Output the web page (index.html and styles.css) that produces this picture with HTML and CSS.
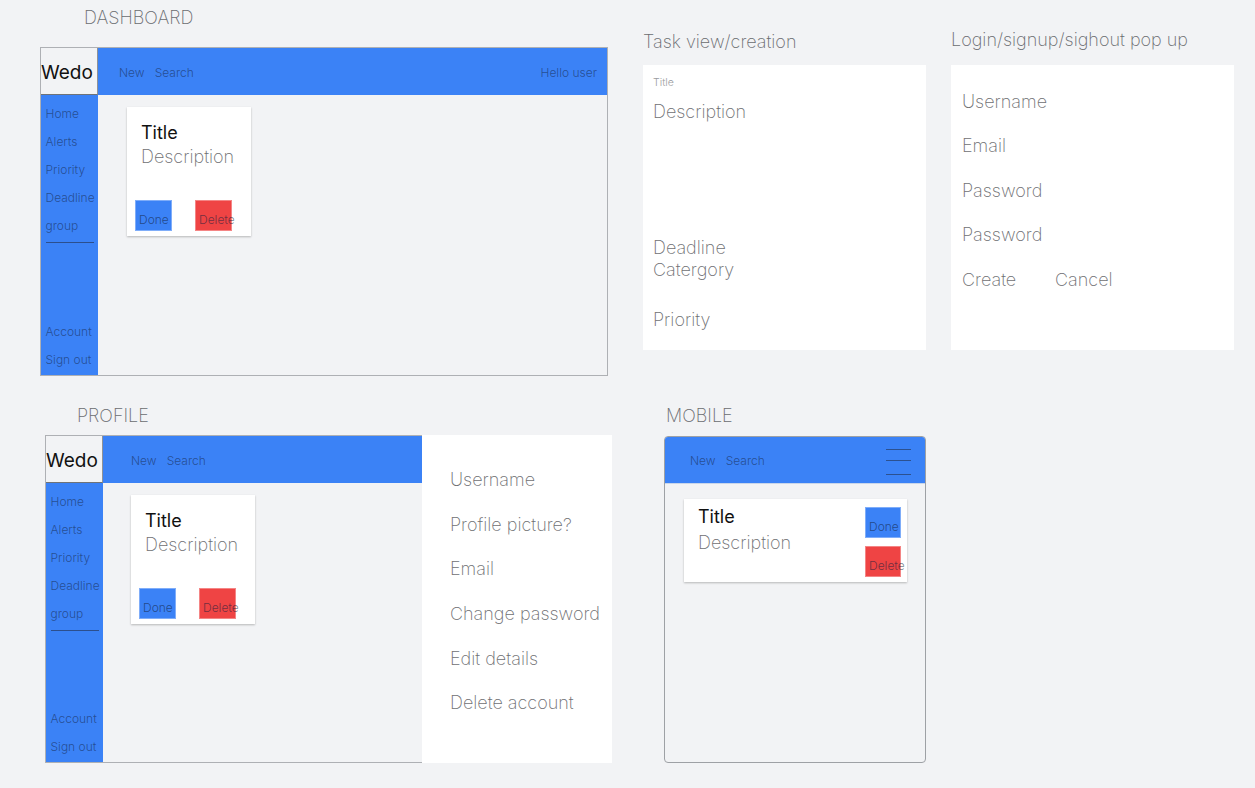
FILE: index.html
```html
<!DOCTYPE html>
<html lang="en">
<head>
    <meta charset="UTF-8">
    <meta name="viewport" content="width=device-width, initial-scale=1.0">
    <title>Wedo wireframes</title>
    <link rel="stylesheet" href="styles.css">
</head>
<body>
    <div class="canvas">

        <!-- Dashboard -->
        <section class="board board-dashboard">
            <h2 class="board-label">DASHBOARD</h2>
            <div class="app app-dashboard">
                <div class="logo">Wedo</div>
                <header class="topbar">
                    <span>New</span>
                    <span>Search</span>
                    <span class="hello">Hello user</span>
                </header>
                <nav class="sidebar">
                    <a>Home</a>
                    <a>Alerts</a>
                    <a>Priority</a>
                    <a>Deadline</a>
                    <a>group</a>
                    <hr class="divider">
                    <div class="sidebar-bottom">
                        <a>Account</a>
                        <a>Sign out</a>
                    </div>
                </nav>
                <main class="main">
                    <div class="task-card">
                        <div class="task-title">Title</div>
                        <div class="task-desc">Description</div>
                        <div class="task-actions">
                            <button class="btn btn-done">Done</button>
                            <button class="btn btn-delete">Delete</button>
                        </div>
                    </div>
                </main>
            </div>
        </section>

        <!-- Task view / creation -->
        <section class="board board-task">
            <h2 class="board-label">Task view/creation</h2>
            <div class="panel task-form">
                <div class="field-small">Title</div>
                <div class="field field-desc">Description</div>
                <div class="field field-deadline">Deadline</div>
                <div class="field">Catergory</div>
                <div class="field field-priority">Priority</div>
            </div>
        </section>

        <!-- Login popup -->
        <section class="board board-login">
            <h2 class="board-label">Login/signup/sighout pop up</h2>
            <div class="panel login-form">
                <div class="field">Username</div>
                <div class="field">Email</div>
                <div class="field">Password</div>
                <div class="field">Password</div>
                <div class="field form-actions">
                    <span class="create">Create</span>
                    <span>Cancel</span>
                </div>
            </div>
        </section>

        <!-- Profile -->
        <section class="board board-profile">
            <h2 class="board-label">PROFILE</h2>
            <div class="profile-frame">
                <div class="app app-profile">
                    <div class="logo">Wedo</div>
                    <header class="topbar">
                        <span>New</span>
                        <span>Search</span>
                    </header>
                    <nav class="sidebar">
                        <a>Home</a>
                        <a>Alerts</a>
                        <a>Priority</a>
                        <a>Deadline</a>
                        <a>group</a>
                        <hr class="divider">
                        <div class="sidebar-bottom">
                            <a>Account</a>
                            <a>Sign out</a>
                        </div>
                    </nav>
                    <main class="main">
                        <div class="task-card">
                            <div class="task-title">Title</div>
                            <div class="task-desc">Description</div>
                            <div class="task-actions">
                                <button class="btn btn-done">Done</button>
                                <button class="btn btn-delete">Delete</button>
                            </div>
                        </div>
                    </main>
                </div>
                <div class="profile-panel">
                    <div class="field">Username</div>
                    <div class="field">Profile picture?</div>
                    <div class="field">Email</div>
                    <div class="field">Change password</div>
                    <div class="field">Edit details</div>
                    <div class="field">Delete account</div>
                </div>
            </div>
        </section>

        <!-- Mobile -->
        <section class="board board-mobile">
            <h2 class="board-label">MOBILE</h2>
            <div class="phone">
                <header class="topbar phone-bar">
                    <span>New</span>
                    <span>Search</span>
                    <svg class="burger" width="25" height="47" viewBox="0 0 25 47">
                        <line x1="0" y1="12.5" x2="25" y2="12.5"/>
                        <line x1="0" y1="23.5" x2="25" y2="23.5"/>
                        <line x1="0" y1="37.5" x2="25" y2="37.5"/>
                    </svg>
                </header>
                <div class="phone-body">
                    <div class="mobile-card">
                        <div class="mobile-text">
                            <div class="task-title">Title</div>
                            <div class="task-desc">Description</div>
                        </div>
                        <div class="mobile-actions">
                            <button class="btn btn-done">Done</button>
                            <button class="btn btn-delete">Delete</button>
                        </div>
                    </div>
                </div>
            </div>
        </section>

    </div>
</body>
</html>
```

FILE: styles.css
```css
* {
    margin: 0;
    padding: 0;
    box-sizing: border-box;
}

body {
    font-family: 'Inter', 'Liberation Sans', sans-serif;
    background: #f2f3f5;
    width: 1255px;
    height: 788px;
    overflow: hidden;
}

/* free canvas, every board sits where it was drawn */
.canvas {
    position: relative;
    width: 1255px;
    height: 788px;
}

.board {
    position: absolute;
    display: flex;
    flex-direction: column;
}

.board-label {
    font-size: 18px;
    line-height: 22px;
    font-weight: 200;
    color: #6a6c70;
    white-space: nowrap;
}

.board-dashboard { left: 40px; top: 7px; }
.board-dashboard .board-label { margin: 0 0 18px 44px; }

.board-task { left: 643px; top: 31px; }
.board-task .board-label { margin-bottom: 12px; }

.board-login { left: 951px; top: 29px; }
.board-login .board-label { margin-bottom: 14px; }

.board-profile { left: 45px; top: 405px; }
.board-profile .board-label { margin: 0 0 8px 32px; }

.board-mobile { left: 664px; top: 405px; }
.board-mobile .board-label { margin: 0 0 9px 2px; }

/* app shell */
.app {
    display: grid;
    grid-template-columns: 57px 1fr;
    grid-template-rows: 47px 1fr;
    border: 1px solid #aeb0b4;
}

.app-dashboard {
    width: 568px;
    height: 329px;
}

.logo {
    background: #f2f3f5;
    border-right: 1px solid #8f9297;
    border-bottom: 1px solid #6f7378;
    font-size: 19px;
    line-height: 49px;
    color: #111;
    white-space: nowrap;
    overflow: visible;
}

.topbar {
    display: flex;
    align-items: center;
    gap: 10px;
    background: #3b82f6;
    padding: 2px 10px 0 21px;
    font-size: 12px;
    font-weight: 300;
    color: rgba(20, 30, 60, 0.55);
}

.hello {
    margin-left: auto;
}

.sidebar {
    display: flex;
    flex-direction: column;
    background: #3b82f6;
    padding: 5px 4px 1px 4.5px;
    font-size: 12px;
    font-weight: 300;
    line-height: 28px;
    color: rgba(20, 30, 60, 0.55);
}

.divider {
    border: none;
    height: 1px;
    background: #2c4f8d;
    margin-top: 2px;
}

.sidebar-bottom {
    display: flex;
    flex-direction: column;
    margin-top: auto;
}

.main {
    padding: 12px 29px;
}

/* task card */
.task-card {
    width: 124px;
    height: 129px;
    background: #fff;
    box-shadow: 0 1px 2px rgba(0, 0, 0, 0.25);
    padding: 14.5px 8px 0 14px;
}

.task-title {
    font-size: 18px;
    line-height: 22px;
    color: #111;
}

.task-desc {
    margin-top: 2.5px;
    font-size: 18px;
    line-height: 22px;
    font-weight: 200;
    color: #6f7073;
    white-space: nowrap;
}

.task-actions {
    display: flex;
    gap: 23px;
    margin: 32px 0 0 -6px;
}

.btn {
    display: block;
    width: 37px;
    height: 31px;
    padding: 8px 0 0 3px;
    border: 1px solid rgba(255, 255, 255, 0.35);
    font-family: inherit;
    font-size: 12px;
    line-height: 15px;
    font-weight: 300;
    text-align: left;
    white-space: nowrap;
    color: rgba(20, 30, 60, 0.6);
    overflow: visible;
}

.btn-done {
    background: #3b82f6;
}

.btn-delete {
    background: #ef4444;
}

/* white panels */
.panel {
    background: #fff;
    width: 283px;
    height: 285px;
    display: flex;
    flex-direction: column;
}

.field {
    font-size: 18px;
    line-height: 22px;
    font-weight: 200;
    color: #6f7073;
    white-space: nowrap;
}

.task-form {
    padding: 12px 10px;
}

.field-small {
    font-size: 10.5px;
    line-height: 12px;
    font-weight: 300;
    color: #9a9b9e;
}

.field-desc { margin-top: 11.5px; }
.field-deadline { margin-top: 114px; }
.field-priority { margin-top: 28px; }

.login-form {
    padding: 25.5px 11px;
    gap: 22.5px;
}

.form-actions {
    display: flex;
}

.create {
    width: 93px;
}

/* profile */
.profile-frame {
    display: flex;
    height: 328px;
}

.app-profile {
    width: 377px;
    border-right: none;
}

.app-profile .topbar {
    padding-left: 28px;
}

.app-profile .main {
    padding-left: 28px;
}

.profile-panel {
    width: 190px;
    background: #fff;
    display: flex;
    flex-direction: column;
    gap: 22.7px;
    padding: 34px 0 0 28px;
}

/* mobile */
.phone {
    width: 262px;
    height: 327px;
    border: 1px solid #9ea1a5;
    border-radius: 4px;
    overflow: hidden;
    display: flex;
    flex-direction: column;
}

.phone-bar {
    height: 47px;
    flex-shrink: 0;
    padding: 0 14px 0 25px;
    border-bottom: 1px solid #c9d6ea;
}

.burger {
    margin-left: auto;
}

.burger line {
    stroke: #2c5190;
    stroke-width: 1;
}

.phone-body {
    padding: 15px 18px 0 19px;
}

.mobile-card {
    display: flex;
    justify-content: space-between;
    height: 83px;
    background: #fff;
    box-shadow: 0 1px 2px rgba(0, 0, 0, 0.25);
}

.mobile-text {
    padding: 7px 0 0 14px;
}

.mobile-text .task-desc {
    margin-top: 4px;
}

.mobile-actions {
    display: flex;
    flex-direction: column;
    gap: 8px;
    padding: 8px 6px 0 0;
}

.mobile-actions .btn {
    width: 36px;
}
```
